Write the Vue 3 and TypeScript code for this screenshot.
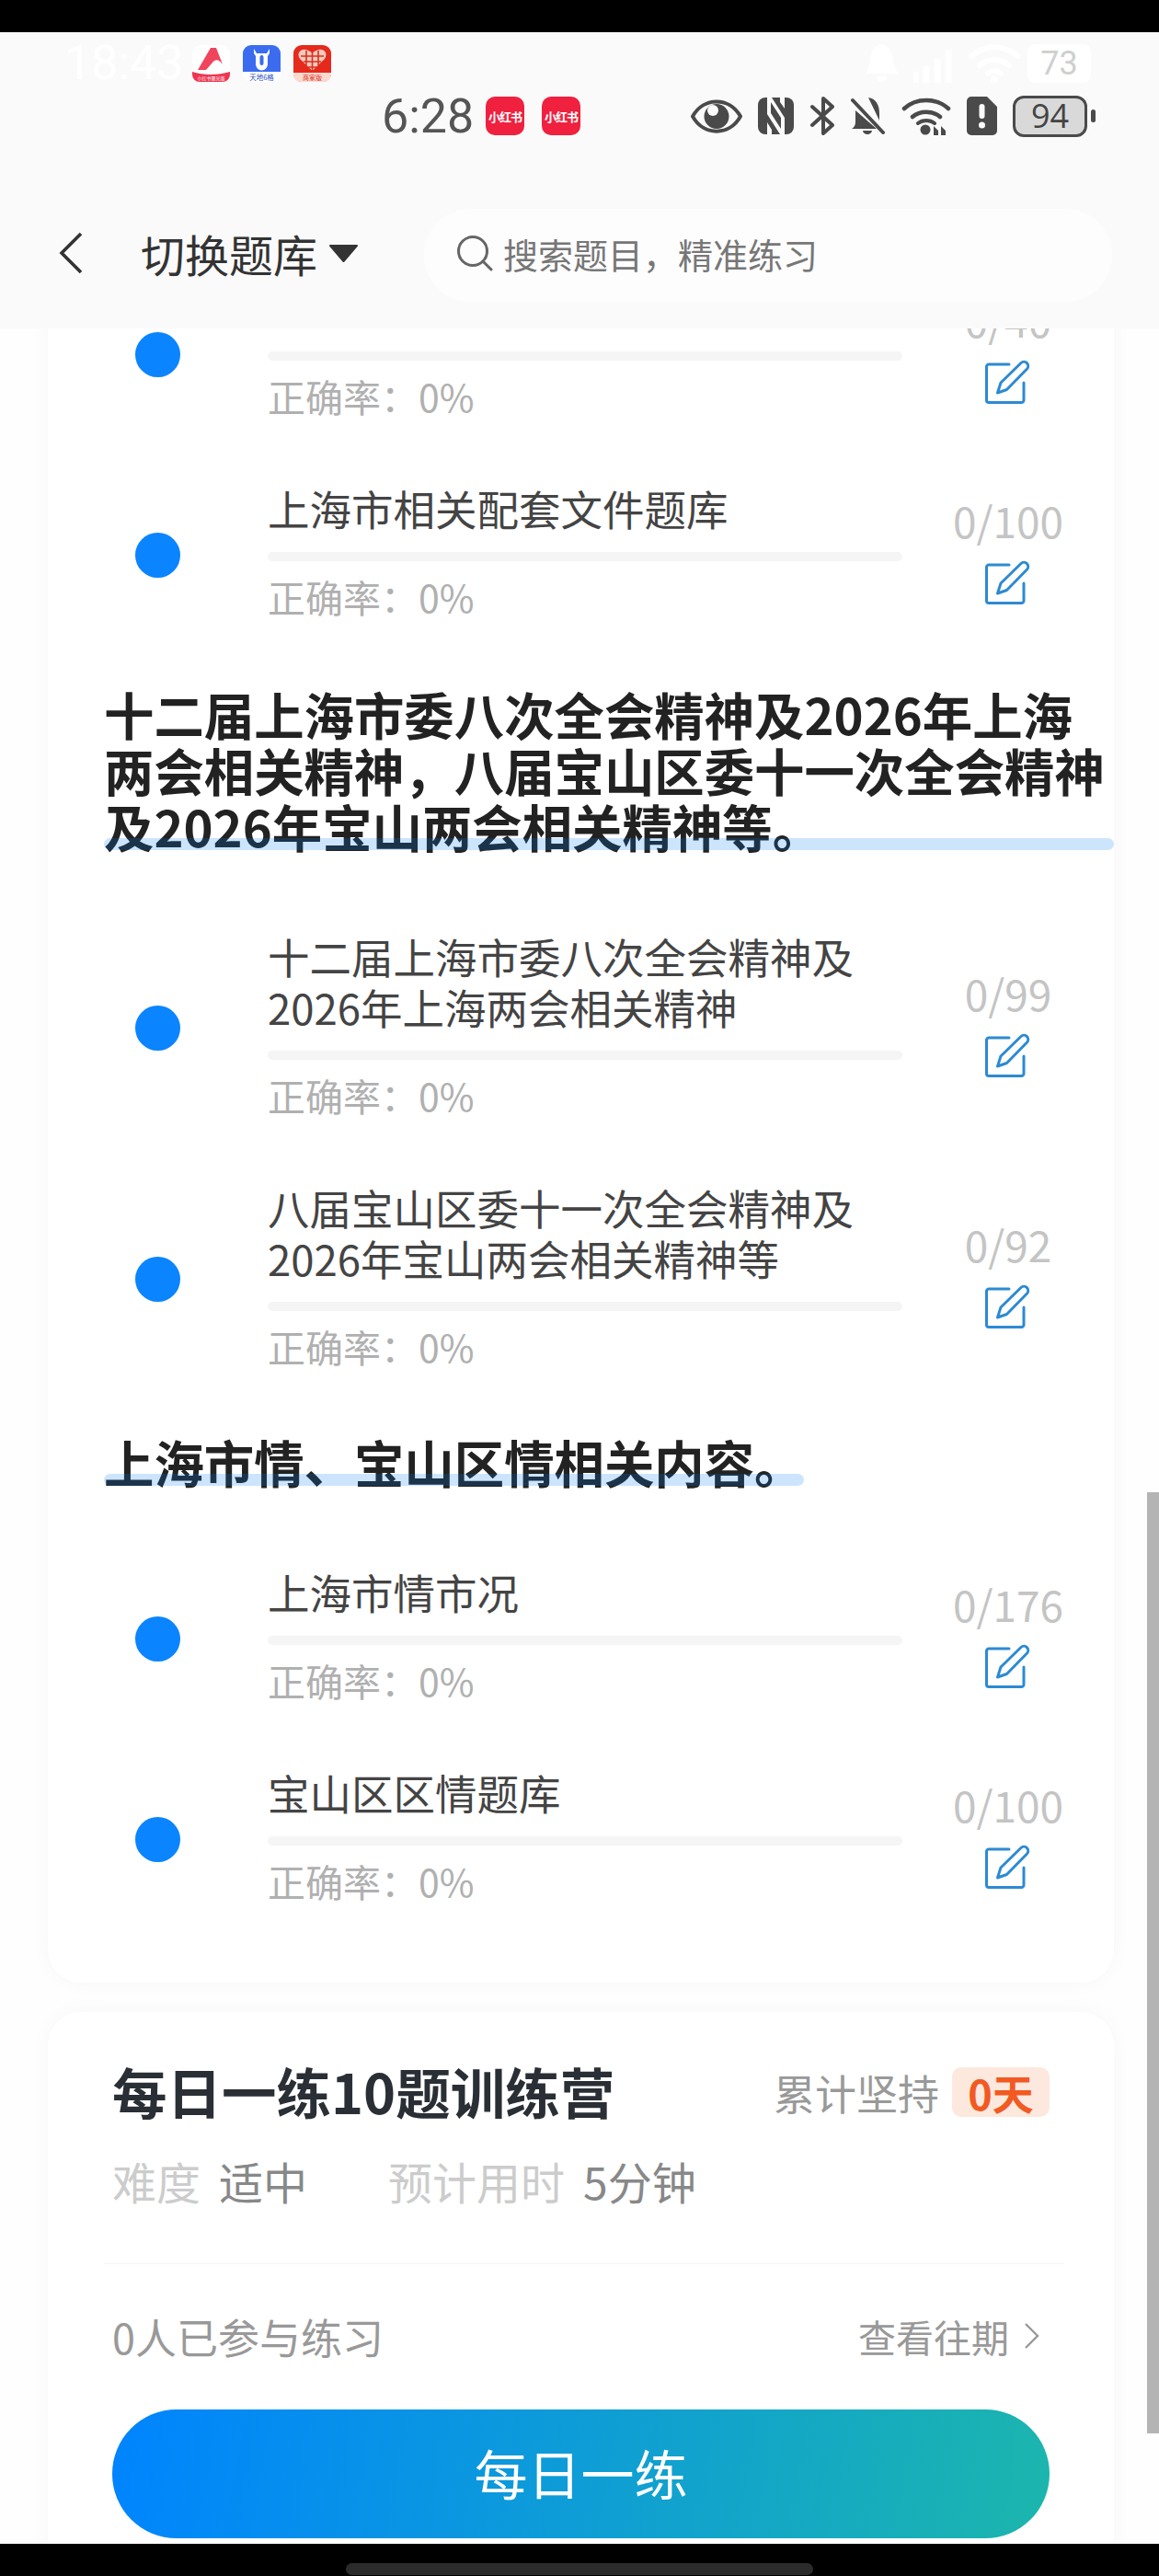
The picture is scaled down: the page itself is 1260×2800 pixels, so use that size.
<script setup lang="ts">
interface BankRow {
  title: string[]
  count: string
}

interface BankGroup {
  heading: string
  rows: BankRow[]
}

const groups: BankGroup[] = [
  {
    heading: '',
    rows: [
      // 第一行的标题已滚到顶部栏之下
      { title: [''], count: '0/40' },
      { title: ['上海市相关配套文件题库'], count: '0/100' },
    ],
  },
  {
    heading: '十二届上海市委八次全会精神及2026年上海两会相关精神，八届宝山区委十一次全会精神及2026年宝山两会相关精神等。',
    rows: [
      { title: ['十二届上海市委八次全会精神及', '2026年上海两会相关精神'], count: '0/99' },
      { title: ['八届宝山区委十一次全会精神及', '2026年宝山两会相关精神等'], count: '0/92' },
    ],
  },
  {
    heading: '上海市情、宝山区情相关内容。',
    rows: [
      { title: ['上海市情市况'], count: '0/176' },
      { title: ['宝山区区情题库'], count: '0/100' },
    ],
  },
]
</script>

<template>
  <div class="page">
    <div class="black-top"></div>

    <header class="header">
      <!-- 上一层状态栏的残影 -->
      <div class="ghost-row">
        <span class="ghost-time">18:43</span>
        <svg class="app-icon" viewBox="0 0 41 40">
          <rect width="41" height="40" rx="9" fill="#fff" />
          <path d="M6 27 L20 3 H26 L33 21 C29 15 25 15 22 19 L15 27 Z" fill="#f0455c" />
          <path d="M0 29 C12 33 28 33 41 29 V32 a8 8 0 0 1-8 8 H8 a8 8 0 0 1-8-8 Z" fill="#ee3550" />
          <text x="20.5" y="37.5" font-size="5" fill="#fff" text-anchor="middle">小红书聚光版</text>
        </svg>
        <svg class="app-icon" viewBox="0 0 41 40">
          <rect width="41" height="40" rx="9" fill="#fff" />
          <path d="M0 9 a9 9 0 0 1 9-9 H32 a9 9 0 0 1 9 9 V29 H0 Z" fill="#3b6cf0" />
          <path d="M12 4 L15 9 H26 L29 4 V9 L27 12 V21 a6.5 6.5 0 0 1-13 0 V12 L12 9 Z" fill="#fff" />
          <rect x="18.5" y="11" width="4" height="11" rx="2" fill="#3b6cf0" />
          <text x="20.5" y="37.5" font-size="7.5" fill="#2a4fc0" text-anchor="middle">天地6格</text>
        </svg>
        <svg class="app-icon" viewBox="0 0 41 40">
          <rect width="41" height="40" rx="9" fill="#e5291c" />
          <path d="M20.5 28 L7 15 C3 9 8 4 13 5 C16 5.500 19 7 20.500 9 C22 7 25 5.500 28 5 C33 4 38 9 34 15 Z" fill="#f8c9bd" />
          <path d="M8 12 H33 M11 18 H30 M15 24 H26 M14 6 V22 M20.500 8 V28 M27 6 V22" stroke="#d8301f" stroke-width="1.600" />
          <path d="M0 30 H41 V32 a8 8 0 0 1-8 8 H8 a8 8 0 0 1-8-8 Z" fill="#fbd9d0" />
          <text x="20.5" y="37.5" font-size="7" fill="#d8301f" text-anchor="middle">商家版</text>
        </svg>
        <div class="ghost-right">
          <svg class="ghost-bell" viewBox="0 0 37 42">
            <path d="M18 0 C28 2 31 10 31 20 L36 32 H1 L6 20 C6 10 9 2 18 0 Z M13 35 H24 a5.500 6 0 0 1-11 0 Z" fill="#fff" />
          </svg>
          <svg class="ghost-signal" viewBox="0 0 48 42">
            <path d="M2 42 V30 M14 42 V24 M26 42 V16 M38 42 V6" stroke="#fff" stroke-width="7" />
          </svg>
          <svg class="ghost-wifi" viewBox="0 0 56 42">
            <path d="M3 13 C18 0 38 0 53 13 M12 23 C21 15 35 15 44 23 M21 32 C25 28 31 28 35 32" fill="none" stroke="#fff" stroke-width="6" stroke-linecap="round" />
            <circle cx="28" cy="38" r="4" fill="#fff" />
          </svg>
          <span class="ghost-battery">73</span>
        </div>
      </div>

      <div class="status-row">
        <span class="time">6:28</span>
        <span class="red-badge">小红书</span>
        <span class="red-badge second">小红书</span>
        <div class="status-icons">
          <svg class="ic-eye" viewBox="0 0 56 37">
            <path d="M2 18.500 C14 -3 42 -3 54 18.500 C42 40 14 40 2 18.500 Z" fill="none" stroke="#4a4a4a" stroke-width="4" stroke-linejoin="round" />
            <circle cx="28" cy="18.500" r="13.500" fill="#4a4a4a" />
            <circle cx="24" cy="12" r="6" fill="#fafafa" />
          </svg>
          <svg class="ic-nfc" viewBox="0 0 39 40">
            <rect width="39" height="40" rx="8" fill="#4a4a4a" />
            <path d="M10 0 H15 L29 22 V40 H24 L10 18 Z" fill="#fafafa" />
            <path d="M14 5 L25 22 V34 L14 17 Z" fill="#4a4a4a" />
            <path d="M24 0 H29 V12 L24 5 Z M10 27 L15 35 V40 H10 Z" fill="#fafafa" />
          </svg>
          <svg class="ic-bt" viewBox="0 0 26 42">
            <path d="M2 11 L24 31 L14 40 V2 L24 11 L2 31" fill="none" stroke="#4a4a4a" stroke-width="4" stroke-linejoin="round" stroke-linecap="round" />
          </svg>
          <svg class="ic-bell" viewBox="0 0 37 42">
            <path d="M19 1 C27 2 31 9 31 18 V26 Z M5 15 L28 35 H1 C4 33 5 31 5 27 Z M13 37 H23 a5 4 0 0 1-10 0 Z" fill="#4a4a4a" />
            <path d="M2 4 L35 39" stroke="#4a4a4a" stroke-width="4" stroke-linecap="round" />
          </svg>
          <svg class="ic-wifi" viewBox="0 0 54 42">
            <path d="M3 13 C16 1 38 1 51 13 M12 22 C20 15 34 15 42 22" fill="none" stroke="#4a4a4a" stroke-width="4.500" stroke-linecap="round" />
            <path d="M18 29 C23 25 31 25 36 29" fill="none" stroke="#4a4a4a" stroke-width="4" stroke-linecap="round" />
            <circle cx="26" cy="36" r="5.500" fill="#4a4a4a" />
            <path d="M35 42 V32 L40 37 V42 Z M43 32 L48 37 V42 L43 42 Z" fill="#4a4a4a" />
          </svg>
          <svg class="ic-sim" viewBox="0 0 33 42">
            <path d="M5 0 H22 L33 11 V37 a5 5 0 0 1-5 5 H5 a5 5 0 0 1-5-5 V5 a5 5 0 0 1 5-5 Z" fill="#4a4a4a" />
            <rect x="13.500" y="8" width="6" height="16" rx="3" fill="#fafafa" />
            <circle cx="16.500" cy="31" r="3.500" fill="#fafafa" />
          </svg>
          <div class="battery"><span>94</span></div>
          <span class="battery-nub"></span>
        </div>
      </div>

      <div class="nav-row">
        <svg class="back" viewBox="0 0 26 46">
          <path d="M24 2 L3 23 L24 44" fill="none" stroke="#333" stroke-width="3.600" />
        </svg>
        <span class="switch">切换题库</span>
        <svg class="caret" viewBox="0 0 33 20">
          <path d="M2 2 H31 L16.500 19 Z" fill="#333" stroke="#333" stroke-width="2" stroke-linejoin="round" />
        </svg>
        <div class="search">
          <svg class="search-icon" viewBox="0 0 40 40">
            <circle cx="18" cy="18" r="15.500" fill="none" stroke="#666" stroke-width="3" />
            <path d="M29 29 L38 38" stroke="#666" stroke-width="3" stroke-linecap="round" />
          </svg>
          <span>搜索题目，精准练习</span>
        </div>
      </div>
    </header>

    <main class="content">
      <section class="card bank-card">
        <div v-for="(group, gi) in groups" :key="gi" class="group">
          <div v-if="group.heading" class="heading-wrap">
            <h2 class="heading">{{ group.heading }}</h2>
          </div>
          <div v-for="row in group.rows" :key="row.title[0]" class="row">
            <span class="dot"></span>
            <div class="row-main">
              <div class="row-title">
                <div v-for="line in row.title" :key="line">{{ line }}</div>
              </div>
              <div class="bar"></div>
              <div class="accuracy">正确率：0%</div>
            </div>
            <div class="row-side">
              <span class="count">{{ row.count }}</span>
              <svg class="edit" viewBox="0 0 50 48">
                <path d="M26 5 H4 a2.500 2.500 0 0 0-2.500 2.500 V44 a2.500 2.500 0 0 0 2.500 2.500 H39.500 a2.500 2.500 0 0 0 2.500-2.500 V25" fill="none" stroke="#2d8ad2" stroke-width="3" stroke-linecap="round" />
                <path d="M13.500 36 L17 25 L39 3.500 a4.600 4.600 0 0 1 6.500 6.500 L23.500 32.500 Z" fill="none" stroke="#2d8ad2" stroke-width="3" stroke-linejoin="round" />
              </svg>
            </div>
          </div>
        </div>
      </section>

      <section class="card camp-card">
        <div class="camp-head">
          <h3 class="camp-title">每日一练10题训练营</h3>
          <div class="streak">
            <span>累计坚持</span>
            <span class="streak-badge">0天</span>
          </div>
        </div>
        <div class="camp-meta">
          <span class="meta-label">难度</span>
          <span class="meta-value">适中</span>
          <span class="meta-label second">预计用时</span>
          <span class="meta-value">5分钟</span>
        </div>
        <div class="divider"></div>
        <div class="camp-foot">
          <span>0人已参与练习</span>
          <span class="history">
            查看往期
            <svg class="history-arrow" viewBox="0 0 17 30">
              <path d="M2 2 L15 15 L2 28" fill="none" stroke="#999" stroke-width="2.400" />
            </svg>
          </span>
        </div>
        <button class="practice">每日一练</button>
      </section>
    </main>

    <div class="scrollbar"></div>

    <div class="black-bottom">
      <span class="home-pill"></span>
    </div>
  </div>
</template>

<style>
html,
body {
  margin: 0;
  background: #000;
}
</style>

<style scoped>
.page {
  position: relative;
  display: flex;
  flex-direction: column;
  width: 1260px;
  height: 2800px;
  overflow: hidden;
  background: #fefefe;
  font-family: "Noto Sans CJK SC", "Noto Sans", sans-serif;
}

.black-top {
  flex: none;
  height: 35px;
  background: #000;
}

.header {
  position: relative;
  z-index: 2;
  flex: none;
  box-sizing: border-box;
  height: 322px;
  padding-top: 12px;
  background: #fafafa;
}

.ghost-row {
  display: flex;
  align-items: center;
  height: 43px;
  padding-left: 70px;
}

.ghost-time {
  width: 139px;
  font-family: Roboto, sans-serif;
  font-size: 52px;
  color: #fff;
}

.app-icon {
  width: 41px;
  height: 40px;
  margin-right: 14px;
}

.ghost-right {
  display: flex;
  align-items: center;
  margin-left: auto;
  padding-right: 74px;
}

.ghost-bell {
  width: 37px;
  height: 42px;
  margin-right: 16px;
}

.ghost-signal {
  width: 48px;
  height: 42px;
  margin-right: 12px;
}

.ghost-wifi {
  width: 56px;
  height: 42px;
  margin-right: 8px;
}

.ghost-battery {
  display: flex;
  align-items: center;
  justify-content: center;
  width: 69px;
  height: 42px;
  border-radius: 8px;
  background: #fff;
  font-family: Roboto, sans-serif;
  font-size: 36px;
  color: #cfcfcf;
}

.status-row {
  display: flex;
  align-items: center;
  height: 46px;
  margin-top: 13px;
  padding-left: 415px;
}

.time {
  width: 113px;
  font-family: Roboto, sans-serif;
  font-size: 52px;
  color: #555;
}

.red-badge {
  display: flex;
  align-items: center;
  justify-content: center;
  width: 42px;
  height: 42px;
  border-radius: 10px;
  background: #f0213f;
  font-size: 13px;
  font-weight: 700;
  letter-spacing: -1px;
  color: #fff;
}

.red-badge.second {
  margin-left: 19px;
}

.status-icons {
  display: flex;
  align-items: center;
  margin-left: 120px;
}

.ic-eye {
  width: 56px;
  height: 37px;
  margin-right: 17px;
}

.ic-nfc {
  width: 39px;
  height: 40px;
  margin-right: 18px;
}

.ic-bt {
  width: 26px;
  height: 42px;
  margin-right: 18px;
}

.ic-bell {
  width: 37px;
  height: 42px;
  margin-right: 18px;
}

.ic-wifi {
  width: 54px;
  height: 42px;
  margin-right: 17px;
}

.ic-sim {
  width: 33px;
  height: 42px;
  margin-right: 17px;
}

.battery {
  position: relative;
  box-sizing: border-box;
  display: flex;
  align-items: center;
  justify-content: center;
  width: 81px;
  height: 45px;
  border: 3px solid #4a4a4a;
  border-radius: 12px;
  background: #d9d9d9;
  font-family: "Open Sans", sans-serif;
  font-size: 36px;
  line-height: 1;
  color: #444;
}

.battery-nub {
  width: 5px;
  height: 14px;
  margin-left: 4px;
  border-radius: 3px;
  background: #4a4a4a;
}

.nav-row {
  display: flex;
  align-items: center;
  height: 101px;
  margin-top: 78px;
  padding-left: 64px;
}

.back {
  width: 26px;
  height: 46px;
  margin-right: 63px;
  margin-bottom: 5px;
}

.switch {
  margin-bottom: 5px;
  font-size: 48px;
  line-height: 60px;
  color: #333;
}

.caret {
  width: 33px;
  height: 20px;
  margin-left: 12px;
  margin-bottom: 5px;
}

.search {
  display: flex;
  align-items: center;
  box-sizing: border-box;
  width: 748px;
  height: 101px;
  margin-left: 71px;
  padding-left: 35px;
  padding-bottom: 5px;
  border-radius: 51px;
  background: #fdfdfd;
  font-size: 38px;
  color: #777;
}

.search-icon {
  width: 40px;
  height: 40px;
  margin-right: 11px;
}

.content {
  flex: 1;
  min-height: 0;
  overflow: hidden;
}

.card {
  width: 1159px;
  margin-left: 52px;
  background: #fff;
  border-radius: 36px;
  box-shadow: 0 0 22px rgba(0, 0, 0, 0.035);
}

.bank-card {
  box-sizing: border-box;
  margin-top: -157px;
  padding-top: 107px;
  padding-bottom: 84px;
}

.heading-wrap {
  margin: 70px 0 84px 61px;
}

.group:last-child .heading-wrap {
  margin-top: 68px;
}

.heading {
  position: relative;
  display: inline-block;
  margin: 0;
  font-size: 54.4px;
  font-weight: 700;
  line-height: 61px;
  color: #222;
}

.heading::after {
  content: "";
  position: absolute;
  left: 0;
  right: 0;
  bottom: 4px;
  height: 13px;
  border-radius: 7px;
  background: rgba(0, 124, 240, 0.2);
}

.row {
  display: flex;
  align-items: center;
  padding-left: 95px;
}

.row + .row {
  margin-top: 68px;
}

.dot {
  flex: none;
  width: 49px;
  height: 49px;
  margin: 6px 95px 0 0;
  border-radius: 50%;
  background: #0a84ff;
}

.row-main {
  width: 690px;
}

.row-title {
  min-height: 55px;
  font-size: 45.5px;
  line-height: 55px;
  color: #444;
}

.bar {
  height: 10px;
  margin-top: 20px;
  border-radius: 5px;
  background: #f5f5f5;
}

.accuracy {
  margin-top: 15px;
  padding-bottom: 4px;
  font-size: 41px;
  line-height: 46px;
  color: #b0b0b0;
}

.row-side {
  display: flex;
  flex-direction: column;
  align-items: center;
  width: 130px;
  margin-left: 50px;
}

.count {
  padding-bottom: 8px;
  font-size: 46px;
  line-height: 42px;
  color: #c4c4c4;
}

.edit {
  width: 50px;
  height: 48px;
  margin-top: 15px;
}

.camp-card {
  box-sizing: border-box;
  margin-top: 32px;
  padding: 52px 70px 60px;
}

.camp-head {
  display: flex;
  align-items: center;
  justify-content: space-between;
}

.camp-title {
  margin: 0 0 4px;
  font-size: 59.5px;
  font-weight: 700;
  line-height: 66px;
  color: #2a2f36;
}

.streak {
  display: flex;
  align-items: center;
  font-size: 45px;
  color: #999;
}

.streak-badge {
  display: flex;
  align-items: center;
  justify-content: center;
  width: 106px;
  height: 54px;
  margin-left: 14px;
  border-radius: 10px;
  background: #fde8de;
  font-weight: 700;
  color: #f15a22;
}

.camp-meta {
  display: flex;
  align-items: center;
  height: 58px;
  margin-top: 32px;
  padding-bottom: 2px;
  font-size: 48px;
}

.meta-label {
  margin-right: 20px;
  color: #ccc;
}

.meta-label.second {
  margin-left: 88px;
}

.meta-value {
  color: #888;
}

.divider {
  height: 1px;
  margin: 59px -16px 0 -9px;
  background: #f6f6f6;
}

.camp-foot {
  display: flex;
  align-items: center;
  justify-content: space-between;
  height: 56px;
  margin-top: 50px;
  padding-bottom: 4px;
  font-size: 45px;
  color: #999;
}

.history {
  display: flex;
  align-items: center;
  padding-right: 11px;
  font-size: 41px;
}

.history-arrow {
  width: 17px;
  height: 30px;
  margin-left: 16px;
}

.practice {
  display: block;
  width: 1019px;
  height: 140px;
  margin-top: 48px;
  padding: 0 0 5px;
  border: 0;
  border-radius: 70px;
  background: linear-gradient(100deg, #0084ff 0%, #1cb6ad 100%);
  font-family: inherit;
  font-size: 58px;
  color: #fff;
}

.scrollbar {
  position: absolute;
  top: 1622px;
  right: 0;
  width: 13px;
  height: 1023px;
  background: #b4b4b4;
}

.black-bottom {
  position: relative;
  z-index: 2;
  display: flex;
  align-items: flex-end;
  justify-content: center;
  flex: none;
  height: 35px;
  background: #000;
}

.home-pill {
  width: 508px;
  height: 13px;
  margin-bottom: 1px;
  border-radius: 7px;
  background: #2b2b2b;
}
</style>
